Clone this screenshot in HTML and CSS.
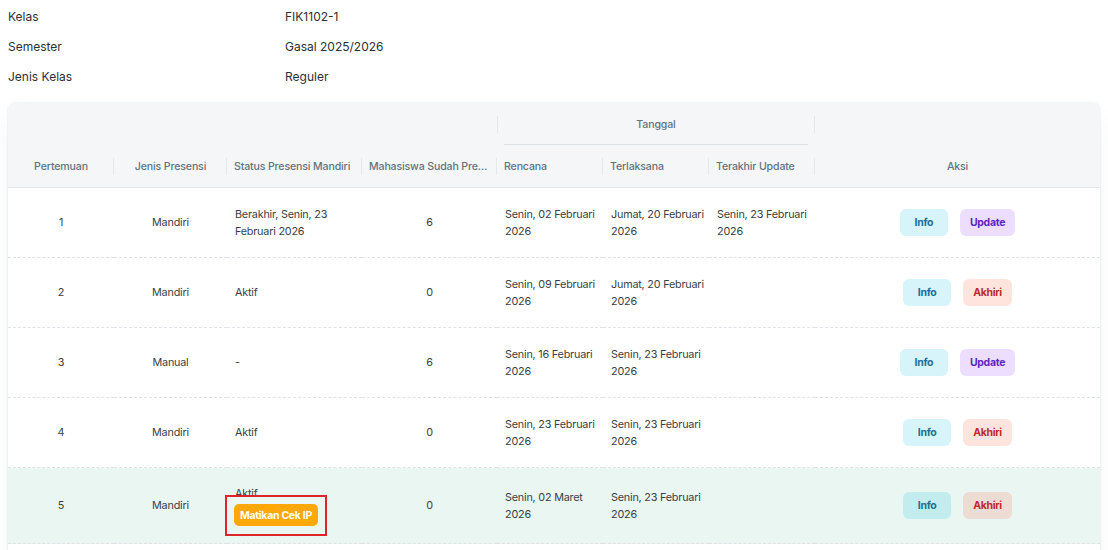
FILE: index.html
```html
<!DOCTYPE html>
<html lang="id">
<head>
<meta charset="utf-8">
<title>Presensi</title>
<link rel="stylesheet" href="styles.css">
</head>
<body>
<div class="page">
  <div class="info">
    <div class="info-row"><span class="info-label">Kelas</span><span class="info-value">FIK1102-1</span></div>
    <div class="info-row"><span class="info-label">Semester</span><span class="info-value">Gasal 2025/2026</span></div>
    <div class="info-row"><span class="info-label">Jenis Kelas</span><span class="info-value">Reguler</span></div>
  </div>

  <div class="card">
    <table class="grid">
      <colgroup>
        <col class="c-no">
        <col class="c-jenis">
        <col class="c-status">
        <col class="c-mhs">
        <col class="c-date">
        <col class="c-date">
        <col class="c-date">
        <col class="c-aksi">
      </colgroup>
      <thead>
        <tr>
          <th rowspan="2" class="center sep">Pertemuan</th>
          <th rowspan="2" class="center sep">Jenis Presensi</th>
          <th rowspan="2" class="sep">Status Presensi Mandiri</th>
          <th rowspan="2" class="sep">Mahasiswa Sudah Presensi</th>
          <th colspan="3" class="group"><div class="group-label">Tanggal</div></th>
          <th rowspan="2" class="center">Aksi</th>
        </tr>
        <tr>
          <th class="sep">Rencana</th>
          <th class="sep">Terlaksana</th>
          <th class="sep">Terakhir Update</th>
        </tr>
      </thead>
      <tbody>
        <tr>
          <td class="center">1</td>
          <td class="center">Mandiri</td>
          <td>Berakhir, Senin, 23 Februari 2026</td>
          <td class="center">6</td>
          <td>Senin, 02 Februari 2026</td>
          <td>Jumat, 20 Februari 2026</td>
          <td>Senin, 23 Februari 2026</td>
          <td class="center"><div class="actions"><button class="btn btn-info">Info</button><button class="btn btn-update">Update</button></div></td>
        </tr>
        <tr>
          <td class="center">2</td>
          <td class="center">Mandiri</td>
          <td>Aktif</td>
          <td class="center">0</td>
          <td>Senin, 09 Februari 2026</td>
          <td>Jumat, 20 Februari 2026</td>
          <td></td>
          <td class="center"><div class="actions"><button class="btn btn-info">Info</button><button class="btn btn-end">Akhiri</button></div></td>
        </tr>
        <tr>
          <td class="center">3</td>
          <td class="center">Manual</td>
          <td>-</td>
          <td class="center">6</td>
          <td>Senin, 16 Februari 2026</td>
          <td>Senin, 23 Februari 2026</td>
          <td></td>
          <td class="center"><div class="actions"><button class="btn btn-info">Info</button><button class="btn btn-update">Update</button></div></td>
        </tr>
        <tr>
          <td class="center">4</td>
          <td class="center">Mandiri</td>
          <td>Aktif</td>
          <td class="center">0</td>
          <td>Senin, 23 Februari 2026</td>
          <td>Senin, 23 Februari 2026</td>
          <td></td>
          <td class="center"><div class="actions"><button class="btn btn-info">Info</button><button class="btn btn-end">Akhiri</button></div></td>
        </tr>
        <tr class="selected">
          <td class="center">5</td>
          <td class="center">Mandiri</td>
          <td><div class="status-stack"><span>Aktif</span><span class="annot"><button class="btn-ip">Matikan Cek IP</button></span></div></td>
          <td class="center">0</td>
          <td>Senin, 02 Maret 2026</td>
          <td>Senin, 23 Februari 2026</td>
          <td></td>
          <td class="center"><div class="actions"><button class="btn btn-info">Info</button><button class="btn btn-end">Akhiri</button></div></td>
        </tr>
      </tbody>
    </table>
  </div>
</div>
</body>
</html>
```

FILE: styles.css
```css
* { box-sizing: border-box; }

html, body {
  margin: 0;
  padding: 0;
  background: #ffffff;
  font-family: Inter, "Noto Sans", sans-serif;
  color: #3a3f44;
}

.page {
  padding: 1px 8px 0 8px;
}

.info {
  display: flex;
  flex-direction: column;
}

.info-row {
  display: flex;
  align-items: center;
  height: 30px;
  font-size: 12px;
  color: #2b3036;
}

.info-label {
  width: 277px;
  flex: none;
}

.card {
  margin-top: 12px;
  padding-bottom: 40px;
  background: #ffffff;
  border-radius: 8px 8px 0 0;
  box-shadow: 0 0 2px rgba(145, 158, 171, 0.35), 0 12px 24px -4px rgba(145, 158, 171, 0.12);
  overflow: hidden;
}

.grid {
  width: 100%;
  border-collapse: collapse;
  table-layout: fixed;
  font-size: 10.8px;
  letter-spacing: -0.2px;
}

.c-no { width: 106px; }
.c-jenis { width: 113px; }
.c-status { width: 135px; }
.c-mhs { width: 135px; }
.c-date { width: 106px; }
.c-aksi { width: auto; }

thead {
  background: #f4f6f8;
}

th {
  position: relative;
  font-weight: 500;
  font-size: 10.6px;
  letter-spacing: -0.15px;
  color: #637381;
  text-align: left;
  line-height: 17px;
  padding: 13px 7px 12px;
  vertical-align: bottom;
  white-space: nowrap;
  overflow: hidden;
  text-overflow: ellipsis;
}

thead tr:last-child th,
th[rowspan] {
  border-bottom: 1px solid #e3e7ea;
}

th.sep::after {
  content: "";
  position: absolute;
  right: 0;
  bottom: 12px;
  width: 1px;
  height: 17px;
  background: #e6e9ec;
}

th.group {
  padding: 0 7px;
  text-align: center;
  vertical-align: top;
}

th.group::before,
th.group::after {
  content: "";
  position: absolute;
  top: 13px;
  width: 1px;
  height: 17px;
  background: #e6e9ec;
}

th.group::before { left: 0; }
th.group::after { right: 0; }

.group-label {
  padding: 13px 0 11px;
  border-bottom: 1px solid #dde2e6;
  text-align: center;
}

.center,
th.center { text-align: center; }

td {
  height: 70px;
  padding: 17px 3px 17px 8px;
  line-height: 17px;
  vertical-align: middle;
  border-bottom: 1px dashed #dfe3e7;
  color: #3a3f44;
}

td.center { padding-left: 5px; padding-right: 5px; }

tr.selected td {
  background: #e9f6f2;
}

.actions {
  display: flex;
  justify-content: center;
  gap: 12px;
}

.btn {
  font-family: Inter, "Noto Sans", sans-serif;
  font-weight: 700;
  font-size: 10.5px;
  letter-spacing: -0.3px;
  height: 27px;
  min-width: 48px;
  padding: 0 10px;
  border: none;
  border-radius: 6px;
  cursor: pointer;
}

.btn-info {
  background: rgba(0, 184, 217, 0.16);
  color: #1a6f98;
}

.btn-update {
  background: rgba(142, 51, 255, 0.16);
  color: #5a28bd;
}

.btn-end {
  background: rgba(255, 86, 48, 0.16);
  color: #c0282a;
}

.status-stack {
  display: flex;
  flex-direction: column;
  align-items: flex-start;
  gap: 2px;
}

.annot {
  display: flex;
  margin: -9px -9px -10px -10px;
  padding: 7px 7px 8px 7px;
  border: 2px solid #e0242a;
}

.btn-ip {
  font-family: Inter, "Noto Sans", sans-serif;
  font-weight: 700;
  font-size: 10.5px;
  letter-spacing: -0.3px;
  color: #ffffff;
  background: #ffa808;
  border: none;
  border-radius: 5px;
  height: 22px;
  padding: 0 6px;
}
```
